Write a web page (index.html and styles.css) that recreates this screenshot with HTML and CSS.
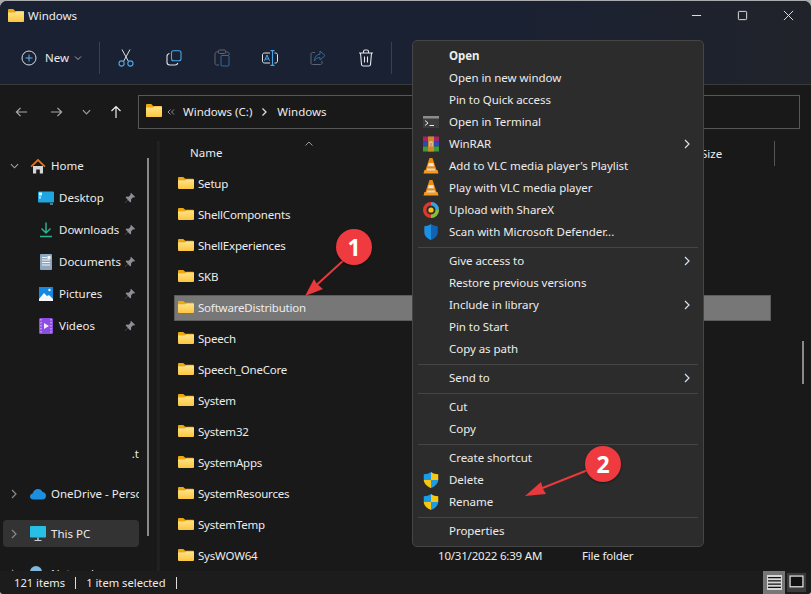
FILE: index.html
```html
<!DOCTYPE html>
<html lang="en">
<head>
<meta charset="utf-8">
<title>Windows</title>
<link rel="stylesheet" href="styles.css">
</head>
<body>
<svg class="defs" width="0" height="0" aria-hidden="true">
  <defs>
    <linearGradient id="fg" x1="0" y1="0" x2="0" y2="1"><stop offset="0" stop-color="#ffe38a"/><stop offset="1" stop-color="#fcc63f"/></linearGradient>
    <symbol id="folder" viewBox="0 0 16 13" preserveAspectRatio="none">
      <path d="M0 1.200C0 .5.500 0 1.200 0h4l2 2H15c.6 0 1 .4 1 1v1H0z" fill="#eea80f"/>
      <path d="M0 3.600h7l1.600-1H15c.6 0 1 .4 1 1V12c0 .6-.4 1-1 1H1c-.6 0-1-.4-1-1z" fill="url(#fg)"/>
    </symbol>
    <symbol id="pin" viewBox="0 0 12 12">
      <path d="M7 .8 11.200 5 10.200 5.600 9 5.300 7 7.400l.2 2-1 1L3.900 8 1 11 .8 10.800 3.800 7.800 1.600 5.600l1-1 2 .2 2-2L6.400 1.600z" fill="#8d9096"/>
    </symbol>
    <symbol id="cone" viewBox="0 0 16 16">
      <path d="M6.500 0h3l4 12H2.500z" fill="#f08a0c"/>
      <path d="M5.800 5h4.400l.9 3.200H4.900z" fill="#e9e9e9"/>
      <path d="M1.500 12h13l1 3.500H.5z" fill="#f59a1c"/>
      <path d="M4.200 10.500h7.600l.5 2H3.700z" fill="#d8d8d8"/>
    </symbol>
    <symbol id="uac" viewBox="0 0 14 15">
      <path d="M7 0c2 1.400 4 2 6.800 2.200V7.500H7z" fill="#f7c612"/>
      <path d="M.2 7.500H7V15C3.400 13.600.5 11.200.2 7.500z" fill="#f7c612"/>
      <path d="M7 7.500h6.800c-.3 3.700-3.200 6.100-6.800 7.500z" fill="#1c9be6"/>
      <path d="M7 0C5 1.400 3 2 .2 2.200v5.300H7z" fill="#1c9be6"/>
    </symbol>
    <symbol id="chev-r" viewBox="0 0 8 10"><path d="M2 1l4 4-4 4" fill="none" stroke="currentColor" stroke-width="1.200"/></symbol>
  </defs>
</svg>

<div class="window">
  <header class="titlebar">
    <svg class="ic-folder"><use href="#folder"/></svg>
    <span class="title">Windows</span>
    <div class="caption">
      <svg class="cap" viewBox="0 0 12 12"><path d="M1 6h10" stroke="#eee" stroke-width="1"/></svg>
      <svg class="cap" viewBox="0 0 12 12"><rect x="1.500" y="1.500" width="9" height="9" rx="1" fill="none" stroke="#eee"/></svg>
      <svg class="cap" viewBox="0 0 12 12"><path d="M1 1l10 10M11 1L1 11" stroke="#eee"/></svg>
    </div>
  </header>

  <div class="toolbar">
    <div class="new-btn">
      <svg class="new-ic" viewBox="0 0 16 16"><circle cx="8" cy="8" r="7" fill="none" stroke="#d8dbe0" stroke-width="1"/><path d="M8 4.500v7M4.500 8h7" stroke="#5bb5ee" stroke-width="1"/></svg>
      <span class="new-label">New</span>
      <svg class="new-caret" viewBox="0 0 8 6"><path d="M1 1.500l3 3 3-3" fill="none" stroke="#aaa"/></svg>
    </div>
    <span class="tsep"></span>
    <div class="tools">
      <span class="tool"><svg viewBox="0 0 16 18"><path d="M4 .5l6.500 12M12 .5L5.500 12.500" stroke="#dfe2e6" fill="none"/><circle cx="3.600" cy="14.500" r="2.600" fill="none" stroke="#4ba8e8" stroke-width="1.100"/><circle cx="12.400" cy="14.500" r="2.600" fill="none" stroke="#4ba8e8" stroke-width="1.100"/></svg></span>
      <span class="tool"><svg viewBox="0 0 16 16"><rect x="5.500" y=".8" width="9.500" height="10" rx="2" fill="none" stroke="#4ba8e8" stroke-width="1.100"/><path d="M3.500 3.500C2 3.800 1 4.800 1 6.300v6c0 1.500 1.200 2.700 2.700 2.700h5.500c1.300 0 2.300-.8 2.600-2" fill="none" stroke="#dfe2e6" stroke-width="1.100"/></svg></span>
      <span class="tool dim"><svg viewBox="0 0 16 18"><path d="M4 3H2.500C1.600 3 1 3.600 1 4.500v10c0 .9.600 1.500 1.500 1.500H5M12 3h1.500c.9 0 1.500.6 1.500 1.500V6" fill="none" stroke="#5f6670"/><rect x="4.500" y="1" width="7" height="3.500" rx="1" fill="none" stroke="#5f6670"/><rect x="7" y="6.500" width="8" height="10.500" rx="1" fill="none" stroke="#2f6d9c"/></svg></span>
      <span class="tool"><svg viewBox="0 0 16 16"><path d="M8 3H2.500C1.500 3 .5 3.600.5 4.800v6.400c0 1.200 1 1.800 2 1.800H8M12.500 3h1c1 0 2 .6 2 1.800v6.400c0 1.200-1 1.800-2 1.800h-1" fill="none" stroke="#dfe2e6"/><path d="M8.500.6h4M10.500.6v14.800M8.500 15.400h4" fill="none" stroke="#4ba8e8" stroke-width="1.100"/><path d="M2.500 10.800L5 5l2.500 5.800M3.400 9h3.200" fill="none" stroke="#4ba8e8"/></svg></span>
      <span class="tool dim"><svg viewBox="0 0 16 16"><path d="M5 2.500H2.500C1.500 2.500 1 3.100 1 4v9c0 .9.500 1.500 1.500 1.500h8c.9 0 1.500-.6 1.500-1.500v-2" fill="none" stroke="#5f6670"/><path d="M10 1l5 4.500L10 10V7.500C7.500 7.500 5.500 8.500 4.500 11c0-4 2-6.500 5.500-6.800z" fill="none" stroke="#2f6d9c"/></svg></span>
      <span class="tool"><svg viewBox="0 0 16 18"><path d="M1 4h14M5.500 4V2.500C5.500 1.500 6 1 7 1h2c1 0 1.500.5 1.500 1.500V4M2.500 4l1 11.500c.1 1 .7 1.500 1.700 1.500h5.600c1 0 1.600-.5 1.700-1.500l1-11.500M6.500 7.500v6M9.500 7.500v6" fill="none" stroke="#e4e6e9" stroke-width="1.100"/></svg></span>
    </div>
    <span class="tsep tsep-end"></span>
  </div>

  <nav class="navbar">
    <svg class="nav-ic back" viewBox="0 0 14 12"><path d="M13 6H1.500M6 1.500L1.500 6 6 10.500" fill="none" stroke="#a9a9a9" stroke-width="1.300"/></svg>
    <svg class="nav-ic fwd" viewBox="0 0 14 12"><path d="M1 6h11.500M8 1.500L12.500 6 8 10.500" fill="none" stroke="#a9a9a9" stroke-width="1.300"/></svg>
    <svg class="nav-ic down" viewBox="0 0 10 6"><path d="M1 1l4 4 4-4" fill="none" stroke="#a0a0a0" stroke-width="1.300"/></svg>
    <svg class="nav-ic up" viewBox="0 0 12 14"><path d="M6 13V1.500M1.500 6L6 1.500 10.500 6" fill="none" stroke="#eee" stroke-width="1.200"/></svg>
    <div class="address">
      <svg class="ic-folder"><use href="#folder"/></svg>
      <svg class="dbl" viewBox="0 0 8 6"><path d="M3.500.5L1 3l2.500 2.500M7 .5L4.500 3 7 5.500" fill="none" stroke="#8f8f8f"/></svg>
      <span class="crumb">Windows (C:)</span>
      <svg class="crumb-sep" viewBox="0 0 8 10"><path d="M2.500 1.500L6 5 2.500 8.500" fill="none" stroke="#ddd" stroke-width="1.300"/></svg>
      <span class="crumb">Windows</span>
    </div>
  </nav>

  <div class="main">
    <aside class="sidebar">
      <div class="side-row top">
        <svg class="twist" viewBox="0 0 10 6"><path d="M1 1l4 4 4-4" fill="none" stroke="#a5a5a5" stroke-width="1.200"/></svg>
        <svg class="side-ic" viewBox="0 0 16 16"><path d="M3 8h10v7.500H9.800v-4H6.200v4H3z" fill="#d5d7da"/><path d="M8 .8L.5 8l1.200 1.200L8 3.200l6.300 6 1.200-1.200z" fill="#e8731a"/></svg>
        <span class="side-label">Home</span>
      </div>
      <div class="side-row sub">
        <svg class="side-ic" viewBox="0 0 16 13"><rect width="16" height="11" rx="1" fill="#1fa5e0"/><rect x="1" y="1" width="3" height="3" fill="#dff4ff"/><rect x="1" y="5" width="2" height="2" fill="#bde8ff"/><path d="M12 12h3v1h-3z" fill="#9fd8f4"/></svg>
        <span class="side-label">Desktop</span>
        <svg class="pin"><use href="#pin"/></svg>
      </div>
      <div class="side-row sub">
        <svg class="side-ic" viewBox="0 0 16 16"><path d="M8 .5v10M3.500 6.500L8 11l4.500-4.500" fill="none" stroke="#29b28f" stroke-width="1.500"/><path d="M2 14.500h12" stroke="#29b28f" stroke-width="1.500"/></svg>
        <span class="side-label">Downloads</span>
        <svg class="pin"><use href="#pin"/></svg>
      </div>
      <div class="side-row sub">
        <svg class="side-ic" viewBox="0 0 16 16"><rect x="2" width="12" height="16" rx="1" fill="#8fa6bf"/><path d="M4 3.500h5M4 6h8M4 8.500h8M4 11h8" stroke="#f2f5f8"/><rect x="9.500" y="2" width="3" height="3" fill="#f2f5f8"/></svg>
        <span class="side-label">Documents</span>
        <svg class="pin"><use href="#pin"/></svg>
      </div>
      <div class="side-row sub">
        <svg class="side-ic" viewBox="0 0 16 16"><rect x="1" y="1" width="14" height="14" fill="#1688e0"/><path d="M1 13l5-6 3 3 2-1 4 4v2H1z" fill="#f4f8fc"/><circle cx="11.500" cy="4" r="1.200" fill="#fff"/></svg>
        <span class="side-label">Pictures</span>
        <svg class="pin"><use href="#pin"/></svg>
      </div>
      <div class="side-row sub">
        <svg class="side-ic" viewBox="0 0 16 16"><rect x="1" width="14" height="16" rx="1.500" fill="#8d4de0"/><path d="M3 1v14M13 1v14" stroke="#c9a3f5" stroke-width="1.500" stroke-dasharray="1.500 1.500"/><path d="M6 5l5 3-5 3z" fill="#f0e8fc"/></svg>
        <span class="side-label">Videos</span>
        <svg class="pin"><use href="#pin"/></svg>
      </div>
      <div class="side-gap"></div>
      <div class="side-row clip-end"><span class="side-label end">.t</span></div>
      <div class="side-row cloud">
        <svg class="twist" viewBox="0 0 6 10"><path d="M1 1l4 4-4 4" fill="none" stroke="#8a8a8a" stroke-width="1.200"/></svg>
        <svg class="side-ic" viewBox="0 0 16 11"><path d="M3.500 11C1.500 11 0 9.700 0 8c0-1.500 1-2.700 2.600-3C3.300 2.500 5.500.5 8 .5c2 0 3.800 1.200 4.500 3 2 .1 3.500 1.700 3.500 3.700 0 2-1.500 3.800-3.500 3.800z" fill="#1d8fe1"/></svg>
        <span class="side-label">OneDrive - Personal</span>
      </div>
      <div class="side-row active">
        <svg class="twist" viewBox="0 0 6 10"><path d="M1 1l4 4-4 4" fill="none" stroke="#8a8a8a" stroke-width="1.200"/></svg>
        <svg class="side-ic" viewBox="0 0 16 16"><rect width="16" height="11.500" rx=".8" fill="#27bfe6"/><path d="M7 11.500h2v2.500H7z" fill="#8fa4b0"/><path d="M4.500 14h7v1h-7z" fill="#c7d2d8"/></svg>
        <span class="side-label">This PC</span>
      </div>
      <div class="side-row net">
        <svg class="twist" viewBox="0 0 6 10"><path d="M1 1l4 4-4 4" fill="none" stroke="#8a8a8a" stroke-width="1.200"/></svg>
        <svg class="side-ic" viewBox="0 0 16 16"><circle cx="6" cy="6" r="6" fill="#7fb8dc"/><rect x="8" y="7" width="8" height="6" fill="#27a4e0"/></svg>
        <span class="side-label">Network</span>
      </div>
      <span class="side-scroll"></span>
    </aside>

    <section class="files">
      <div class="head">
        <span class="col-name">Name</span>
        <svg class="sort" viewBox="0 0 8 5"><path d="M.5 4.500L4 1l3.500 3.500" fill="none" stroke="#9a9a9a"/></svg>
        <span class="col-size">Size</span>
        <span class="col-line"></span>
      </div>
      <div class="rows">
        <div class="row"><svg class="ic-folder"><use href="#folder"/></svg><span class="fname">Setup</span></div>
        <div class="row"><svg class="ic-folder"><use href="#folder"/></svg><span class="fname">ShellComponents</span></div>
        <div class="row"><svg class="ic-folder"><use href="#folder"/></svg><span class="fname">ShellExperiences</span></div>
        <div class="row"><svg class="ic-folder"><use href="#folder"/></svg><span class="fname">SKB</span></div>
        <div class="row selected"><svg class="ic-folder"><use href="#folder"/></svg><span class="fname">SoftwareDistribution</span></div>
        <div class="row"><svg class="ic-folder"><use href="#folder"/></svg><span class="fname">Speech</span></div>
        <div class="row"><svg class="ic-folder"><use href="#folder"/></svg><span class="fname">Speech_OneCore</span></div>
        <div class="row"><svg class="ic-folder"><use href="#folder"/></svg><span class="fname">System</span></div>
        <div class="row"><svg class="ic-folder"><use href="#folder"/></svg><span class="fname">System32</span></div>
        <div class="row"><svg class="ic-folder"><use href="#folder"/></svg><span class="fname">SystemApps</span></div>
        <div class="row"><svg class="ic-folder"><use href="#folder"/></svg><span class="fname">SystemResources</span></div>
        <div class="row"><svg class="ic-folder"><use href="#folder"/></svg><span class="fname">SystemTemp</span></div>
        <div class="row"><svg class="ic-folder"><use href="#folder"/></svg><span class="fname">SysWOW64</span><span class="fdate">10/31/2022 6:39 AM</span><span class="ftype">File folder</span></div>
      </div>
      <span class="list-scroll"></span>
    </section>
  </div>

  <footer class="status">
    <span>121 items</span><span class="bar"></span><span>1 item selected</span><span class="bar"></span>
    <div class="views">
      <span class="view on"><svg viewBox="0 0 14 14"><path d="M1 2.500h12M1 5.500h12M1 8.500h12M1 11.500h12" stroke="#111" stroke-width="1.200"/></svg></span>
      <span class="view"><svg viewBox="0 0 14 14"><rect x="1" y="1" width="12" height="10" fill="#111" stroke="#ddd" stroke-width="1.200"/></svg></span>
    </div>
  </footer>
</div>

<div class="menu">
  <div class="mi strong"><span class="mi-ic"></span><span>Open</span></div>
  <div class="mi"><span class="mi-ic"></span><span>Open in new window</span></div>
  <div class="mi"><span class="mi-ic"></span><span>Pin to Quick access</span></div>
  <div class="mi"><span class="mi-ic"><svg viewBox="0 0 16 12"><rect width="16" height="12" fill="#3c3c3c"/><rect width="16" height="2.500" fill="#8c8c8c"/><path d="M2 4.500L5 7 2 9.500" fill="none" stroke="#eee"/><path d="M6.500 9.500H11" stroke="#eee"/></svg></span><span>Open in Terminal</span></div>
  <div class="mi"><span class="mi-ic"><svg viewBox="0 0 16 15"><rect width="16" height="5" fill="#a8226a"/><rect y="5" width="16" height="5" fill="#2a4cb0"/><rect y="10" width="16" height="5" fill="#3f9a3a"/><rect x="5" width="6" height="15" fill="#c98a2a"/><rect x="6.500" y="5" width="3" height="5" fill="#f0e8d8"/><rect x="7.500" y="6" width="1" height="4" fill="#c03020"/></svg></span><span>WinRAR</span><svg class="mi-more"><use href="#chev-r"/></svg></div>
  <div class="mi"><span class="mi-ic"><svg><use href="#cone"/></svg></span><span>Add to VLC media player's Playlist</span></div>
  <div class="mi"><span class="mi-ic"><svg><use href="#cone"/></svg></span><span>Play with VLC media player</span></div>
  <div class="mi"><span class="mi-ic"><svg viewBox="0 0 16 16"><circle cx="8" cy="8" r="6.300" fill="none" stroke="#e0372c" stroke-width="3.400"/><path d="M8 1.700A6.300 6.300 0 0 1 14.300 8" fill="none" stroke="#2aa7e6" stroke-width="3.400"/><path d="M14.300 8A6.300 6.300 0 0 1 8 14.300" fill="none" stroke="#7cc23a" stroke-width="3.400"/><circle cx="8" cy="8" r="2.600" fill="#f6c51d"/></svg></span><span>Upload with ShareX</span></div>
  <div class="mi"><span class="mi-ic"><svg viewBox="0 0 14 16"><path d="M7 0C5 1.500 3 2 .3 2.300V8c0 4 3 6.500 6.700 8z" fill="#1f8fe0"/><path d="M7 0c2 1.500 4 2 6.700 2.300V8c0 4-3 6.500-6.700 8z" fill="#0f62b4"/></svg></span><span>Scan with Microsoft Defender...</span></div>
  <hr class="msep">
  <div class="mi"><span class="mi-ic"></span><span>Give access to</span><svg class="mi-more"><use href="#chev-r"/></svg></div>
  <div class="mi"><span class="mi-ic"></span><span>Restore previous versions</span></div>
  <div class="mi"><span class="mi-ic"></span><span>Include in library</span><svg class="mi-more"><use href="#chev-r"/></svg></div>
  <div class="mi"><span class="mi-ic"></span><span>Pin to Start</span></div>
  <div class="mi"><span class="mi-ic"></span><span>Copy as path</span></div>
  <hr class="msep">
  <div class="mi"><span class="mi-ic"></span><span>Send to</span><svg class="mi-more"><use href="#chev-r"/></svg></div>
  <hr class="msep">
  <div class="mi"><span class="mi-ic"></span><span>Cut</span></div>
  <div class="mi"><span class="mi-ic"></span><span>Copy</span></div>
  <hr class="msep">
  <div class="mi"><span class="mi-ic"></span><span>Create shortcut</span></div>
  <div class="mi"><span class="mi-ic"><svg><use href="#uac"/></svg></span><span>Delete</span></div>
  <div class="mi"><span class="mi-ic"><svg><use href="#uac"/></svg></span><span>Rename</span></div>
  <hr class="msep">
  <div class="mi"><span class="mi-ic"></span><span>Properties</span></div>
</div>

<svg class="arrows" viewBox="0 0 811 594" aria-hidden="true">
  <path d="M345 259L316 285.500" stroke="#e8393c" stroke-width="2" fill="none"/>
  <path d="M305 296L314 279 317 284 323 289z" fill="#e8393c"/>
  <path d="M588 470L540 489" stroke="#e8393c" stroke-width="2" fill="none"/>
  <path d="M525 496L541 482 543 489 546 494z" fill="#e8393c"/>
</svg>
<div class="badge badge-1">1</div>
<div class="badge badge-2">2</div>
</body>
</html>
```

FILE: styles.css
```css
* { box-sizing: border-box; }
html, body { margin: 0; padding: 0; }
body {
  width: 811px; height: 594px; overflow: hidden; position: relative;
  background: #a9abae;
  font: 11.5px/16px "Noto Sans", "Open Sans", sans-serif;
  color: #ececec;
}
.defs { position: absolute; }
.window {
  width: 811px; height: 593px; margin-top: 1px;
  display: flex; flex-direction: column;
  border-radius: 7px 7px 4px 4px; overflow: hidden;
  background: #191919;
}
svg { display: block; flex: none; }
.ic-folder { width: 16px; height: 13px; }

.titlebar {
  height: 31px; display: flex; align-items: center; padding: 0 0 2px 8px;
  background: linear-gradient(90deg, #1a2133 0%, #1a2133 60%, #20232a 100%);
}
.title { margin-left: 4px; }
.caption { margin-left: auto; display: flex; gap: 35px; padding-right: 17px; }
.cap { width: 11px; height: 11px; }

.toolbar {
  height: 53px; display: flex; align-items: center; padding-left: 21px;
  background: linear-gradient(90deg, #1a2133 0%, #1a2133 60%, #20232a 100%);
  border-bottom: 1px solid #3a3a3a;
}
.new-btn { display: flex; align-items: center; width: 75px; }
.new-ic { width: 16px; height: 16px; }
.new-label { margin-left: 8px; }
.new-caret { width: 8px; height: 6px; margin-left: 5px; }
.tsep { width: 1px; height: 32px; background: #39404e; margin-left: 3px; }
.tsep-end { margin-left: 1px; }
.tools { display: flex; margin-left: 2px; }
.tool { width: 48px; height: 20px; display: flex; align-items: center; justify-content: center; }
.tool svg { width: 16px; height: 18px; }

.navbar {
  height: 56px; display: flex; align-items: center; padding: 0 0 2px 15px;
  background: #191919;
}
.nav-ic.back, .nav-ic.fwd { width: 13px; height: 12px; }
.nav-ic.fwd { margin-left: 22px; }
.nav-ic.down { width: 9px; height: 6px; margin-left: 19px; }
.nav-ic.up { width: 12px; height: 14px; margin-left: 19px; }
.address {
  width: 662px; height: 34px; margin-left: 16px; padding-left: 8px;
  display: flex; align-items: center;
  border: 1px solid #575757;
}
.address .ic-folder { margin: 0 0 3px -1px; }
.dbl { width: 8px; height: 6px; margin-left: 5px; }
.dbl + .crumb { margin-left: 8px; }
.crumb-sep { width: 8px; height: 10px; margin: 0 9px 0 8px; }

.main { flex: 1; min-height: 0; display: flex; }
.sidebar {
  width: 158px; flex: none; position: relative; padding: 11px 0 0 3px;
  display: flex; flex-direction: column; gap: 5px; overflow: hidden;
  border-right: 1px solid #232323;
}
.side-row {
  width: 136px; height: 27px; flex: none; display: flex; align-items: center;
  padding-left: 8px; border-radius: 4px; overflow: hidden;
}
.side-row.top { padding-left: 7px; }
.side-row.sub { padding-left: 35px; }
.twist { width: 9px; height: 6px; }
.cloud .twist, .active .twist, .net .twist { width: 6px; height: 10px; margin-right: 2px; }
.side-ic { width: 16px; height: 16px; margin-left: 11px; }
.sub .side-ic { margin-left: 0; }
.side-label { margin-left: 5px; white-space: nowrap; }
.sub .side-label { flex: 1; }
.pin { width: 12px; height: 12px; margin-right: 3px; }
.side-gap { height: 91px; flex: none; }
.clip-end { justify-content: flex-end; padding: 0; }
.side-label.end { margin: 0; }
.cloud { margin-top: 8px; }
.active { margin-top: 8px; background: #333; }
.net { margin-top: 8px; }
.side-scroll {
  position: absolute; left: 147px; top: 17px; width: 2px; height: 378px; background: #8a8a8a;
}

.files { flex: 1; min-width: 0; position: relative; overflow: hidden; padding-left: 16px; border-left: 2px solid #202020; letter-spacing: -.2px; }
.head { height: 26px; position: relative; letter-spacing: 0; }
.col-name { position: absolute; left: 14px; top: 4px; }
.sort { position: absolute; left: 129px; top: 0; width: 8px; height: 5px; }
.col-size { position: absolute; left: 525px; top: 5px; }
.col-line { position: absolute; left: 598px; top: 0; width: 1px; height: 25px; background: #555; }
.rows { display: flex; flex-direction: column; gap: 5px; margin-top: 4px; margin-left: -2px; width: 597px; }
.row {
  height: 26px; flex: none; display: flex; align-items: center; padding-left: 4px; position: relative;
}
.row .ic-folder { height: 12px; margin-bottom: 2px; }
.selected { background: #777; border: 1px solid #5c5c5c; padding-left: 3px; }
.fname { margin-left: 4px; }
.fdate { position: absolute; left: 264px; }
.ftype { position: absolute; left: 408px; }
.list-scroll { position: absolute; left: 642px; top: 200px; width: 2px; height: 43px; background: #8a8a8a; }

.status {
  height: 23px; flex: none; display: flex; align-items: center; padding-left: 14px;
  background: #1c1c1c; font-size: 11.2px;
}
.bar { width: 1px; height: 12px; background: #ddd; margin: 0 10px; }
.views { margin-left: auto; display: flex; align-items: center; padding-right: 5px; }
.view { width: 19px; height: 19px; display: flex; align-items: center; justify-content: center; background: #3b3b3b; margin-left: 2px; }
.view.on { width: 22px; height: 23px; background: #777; }
.view svg { width: 15px; height: 15px; }
.view.on svg { background: #d6d6d6; }

.menu {
  position: absolute; left: 412px; top: 40px; width: 292px; height: 507px;
  padding: 5px 0 4px; background: #2c2c2c; border: 1px solid #454545; border-radius: 5px;
  letter-spacing: -.05px;
}
.mi { height: 22px; display: flex; align-items: center; padding: 0 0 2px 10px; position: relative; white-space: nowrap; }
.strong { font-weight: 700; }
.mi-ic { width: 16px; height: 16px; margin-right: 10px; flex: none; display: flex; align-items: center; justify-content: center; }
.mi-ic svg { width: 16px; height: 16px; }
.mi-more { position: absolute; left: 270px; top: 5px; width: 8px; height: 10px; color: #cfe4f7; }
.msep { height: 1px; border: 0; margin: 3px 5px 3px; background: #454545; }

.arrows { position: absolute; left: 0; top: 0; width: 811px; height: 594px; pointer-events: none; }
.badge {
  position: absolute; width: 36px; height: 36px; border-radius: 50%;
  background: #ef3b3f; color: #fff; text-align: center;
  font: 700 23px/36px "Open Sans", sans-serif;
  box-shadow: 0 1px 2px rgba(0, 0, 0, .45);
}
.badge-1 { left: 336px; top: 229px; }
.badge-2 { left: 585px; top: 446px; }
```
